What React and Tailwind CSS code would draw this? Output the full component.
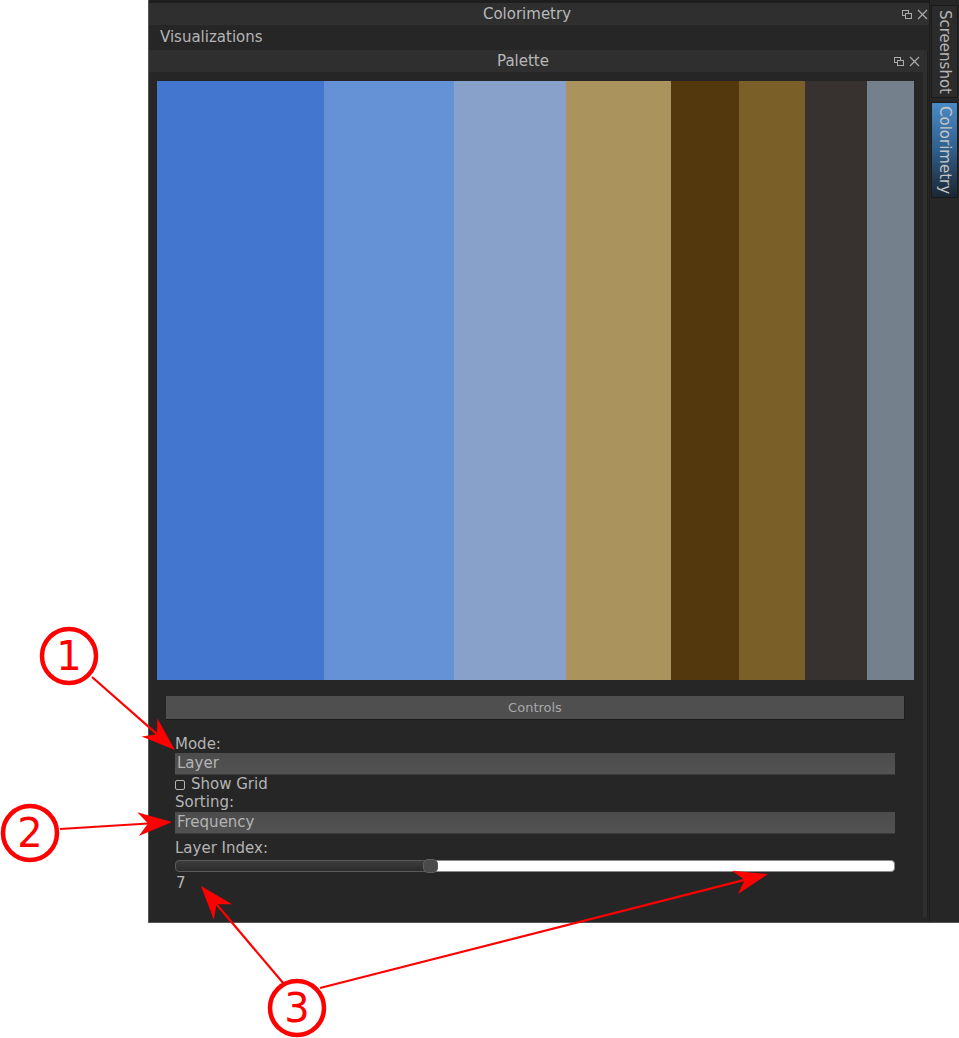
import React from "react";

const strips = [
  { w: 167, c: "#4377cf" },
  { w: 130, c: "#6592d6" },
  { w: 112, c: "#87a1ca" },
  { w: 105, c: "#ab935e" },
  { w: 68, c: "#53380e" },
  { w: 66, c: "#7a5f28" },
  { w: 62, c: "#37322f" },
  { w: 47, c: "#74808b" },
];

// dart shaped arrow head, tip at (x2,y2)
function arrowHead(x1, y1, x2, y2) {
  const dx = x2 - x1;
  const dy = y2 - y1;
  const len = Math.hypot(dx, dy);
  const ux = dx / len;
  const uy = dy / len;
  const px = -uy;
  const py = ux;
  const L = 34;
  const W = 12;
  const N = 24;
  const pts = [
    [x2, y2],
    [x2 - ux * L + px * W, y2 - uy * L + py * W],
    [x2 - ux * N, y2 - uy * N],
    [x2 - ux * L - px * W, y2 - uy * L - py * W],
  ];
  return pts.map((p) => p.join(",")).join(" ");
}

const arrows = [
  [92, 677, 175, 750],
  [60, 829, 172, 822],
  [284, 984, 201, 886],
  [320, 988, 768, 874],
];

const circles = [
  { x: 69, y: 656, n: "1" },
  { x: 30, y: 833, n: "2" },
  { x: 297, y: 1008, n: "3" },
];

function FloatIcon() {
  return (
    <svg width="10" height="9" viewBox="0 0 10 9" className="shrink-0">
      <rect x="0.5" y="0.5" width="6" height="5" fill="none" stroke="#aaaaaa" />
      <rect x="3.5" y="3.5" width="6" height="5" fill="#2f2f2f" stroke="#aaaaaa" />
    </svg>
  );
}

function CloseIcon() {
  return (
    <svg width="11" height="11" viewBox="0 0 11 11" className="shrink-0">
      <path d="M1 1 L10 10 M10 1 L1 10" stroke="#aaaaaa" strokeWidth="1.2" />
    </svg>
  );
}

function TitleBar({ title, className }) {
  return (
    <div className={`flex items-center h-[22px] bg-[#2f2f2f] ${className}`}>
      <div className="flex-1 text-center text-[15px] text-[#b8b8b8] leading-none pl-[3px]">{title}</div>
      <div className="flex items-center gap-[5px]">
        <FloatIcon />
        <CloseIcon />
      </div>
    </div>
  );
}

function Combo({ value }) {
  return (
    <div className="h-[22px] w-[720px] bg-gradient-to-b from-[#4c4c4c] to-[#525252] border-b border-[#3a3a3a] flex items-center px-[2px] text-[15px] text-[#b4b4b4]">
      {value}
    </div>
  );
}

export default function App() {
  return (
    <div
      className="relative w-[959px] h-[1038px] bg-white overflow-hidden"
      style={{ fontFamily: '"DejaVu Sans", sans-serif' }}
    >
      <div className="flex h-[923px]">
        <div className="w-[148px] shrink-0" />
        <div className="flex-1 flex bg-[#262626] border-l border-b border-[#555555]">
          {/* dock window */}
          <div className="w-[780px] flex flex-col border-t-[3px] border-[#1e1e1e]">
            <TitleBar title="Colorimetry" className="pr-[1px]" />
            <div className="h-[25px] flex items-center pl-[11px] text-[15px] text-[#b4b4b4] bg-[#262626]">
              Visualizations
            </div>
            <div className="flex flex-1 pb-[5px]">
              <div className="w-[774px] flex flex-col">
                <TitleBar title="Palette" className="pr-[3px]" />
                <div className="flex-1 flex flex-col pt-[9px] pl-[8px] pr-[9px]">
                  <div className="flex h-[599px]">
                    {strips.map((s, i) => (
                      <div key={i} style={{ width: s.w, background: s.c }} />
                    ))}
                  </div>
                  <div className="pl-[9px] pr-[9px] pt-[16px]">
                    <div className="h-[24px] bg-[#4f4f4f] border-r border-b border-[#1c1c1c] flex items-center justify-center text-[13px] text-[#a8a8a8]">
                      Controls
                    </div>
                  </div>
                  <div className="pl-[18px] pt-[15px] flex flex-col text-[15px] text-[#b4b4b4] leading-[19px]">
                    <div className="h-[18px]">Mode:</div>
                    <Combo value="Layer" />
                    <div className="flex items-center gap-[6px] h-[19px]">
                      <div className="w-[10px] h-[10px] border border-[#b4b4b4] rounded-[2px]" />
                      <span>Show Grid</span>
                    </div>
                    <div className="h-[19px] -mt-[1px]">Sorting:</div>
                    <Combo value="Frequency" />
                    <div className="h-[19px] mt-[5px]">Layer Index:</div>
                    <div className="relative w-[720px] h-[12px] mt-[2px] flex">
                      <div className="w-[254px] h-full rounded-l-[4px] border border-[#5a5a5a] bg-gradient-to-b from-[#3c3c3c] to-[#2c2c2c]" />
                      <div className="flex-1 h-full rounded-r-[4px] border border-[#8a8a8a] bg-white" />
                      <div className="absolute left-[248px] top-[-1px] w-[15px] h-[14px] rounded-[5px] bg-[#4a4a4a] border border-[#5e5e5e]" />
                    </div>
                    <div className="h-[19px] mt-[2px] pl-[1px]">7</div>
                  </div>
                </div>
              </div>
              {/* scroll track */}
              <div className="w-[5px] bg-[#2e2e2e] border-r border-[#1f1f1f]" />
            </div>
          </div>
          {/* side tabs */}
          <div className="flex-1 flex flex-col items-center pt-[5px] gap-[4px] border-l border-[#1e1e1e]">
            <div className="w-[27px] h-[93px] bg-[#2b2b2b] border border-[#1a1a1a] flex items-center justify-center">
              <span className="[writing-mode:vertical-rl] text-[15px] text-[#b4b4b4] leading-none">Screenshot</span>
            </div>
            <div className="w-[27px] h-[96px] bg-gradient-to-b from-[#4a8ac6] via-[#2f5f8c] to-[#1b2733] border border-[#1a1a1a] flex items-center justify-center">
              <span className="[writing-mode:vertical-rl] text-[15px] text-[#c4c4c4] leading-none">Colorimetry</span>
            </div>
          </div>
        </div>
      </div>

      {/* annotations */}
      <svg className="absolute inset-0 pointer-events-none" width="959" height="1038">
        {arrows.map(([x1, y1, x2, y2], i) => {
          const len = Math.hypot(x2 - x1, y2 - y1);
          const ex = x2 - ((x2 - x1) / len) * 24;
          const ey = y2 - ((y2 - y1) / len) * 24;
          return (
            <g key={i}>
              <line x1={x1} y1={y1} x2={ex} y2={ey} stroke="#ff0000" strokeWidth="2.2" />
              <polygon points={arrowHead(x1, y1, x2, y2)} fill="#ff0000" />
            </g>
          );
        })}
        {circles.map((c) => (
          <g key={c.n}>
            <circle cx={c.x} cy={c.y} r="27" fill="white" stroke="#ff0000" strokeWidth="4.5" />
            <text
              x={c.x}
              y={c.y + 14}
              textAnchor="middle"
              fontSize="40"
              fill="#ff0000"
              style={{ fontFamily: '"DejaVu Sans", sans-serif' }}
            >
              {c.n}
            </text>
          </g>
        ))}
      </svg>
    </div>
  );
}
